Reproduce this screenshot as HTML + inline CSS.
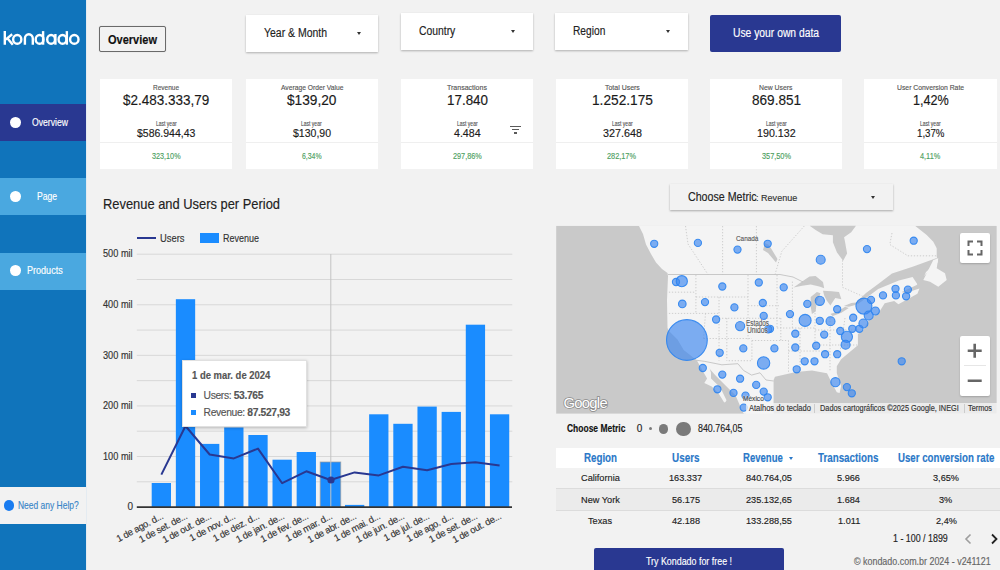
<!DOCTYPE html><html><head><meta charset="utf-8"><style>
*{margin:0;padding:0;box-sizing:border-box}
html,body{width:1000px;height:570px;overflow:hidden;background:#f2f2f2;font-family:"Liberation Sans",sans-serif}
.a{position:absolute}
.t{position:absolute;white-space:nowrap;line-height:1;-webkit-text-stroke:0.15px currentColor}
.card{position:absolute;background:#fff}
.dd{position:absolute;background:#fff;box-shadow:0 1px 2px rgba(0,0,0,.28)}
.arr{position:absolute;width:0;height:0;border-left:2.5px solid transparent;border-right:2.5px solid transparent;border-top:3px solid #333}
</style></head><body>
<div class="a" style="left:0;top:0;width:86px;height:570px;background:#1074bb"></div>
<div class="a" style="left:86px;top:0;width:1px;height:570px;background:#e4ebf1"></div>
<svg class="a" style="left:0;top:0" width="86" height="60"><g fill="none" stroke="#fff" stroke-width="2.4"><path d="M4.8 31.1 V44.7 M12.2 34.3 L5.6 39.6 M7.4 38.2 L12.8 44.7"/><ellipse cx="17.25" cy="39.4" rx="4.1" ry="4.35"/><path d="M24.9 44.7 V38.6 A3.95 4.4 0 0 1 32.8 38.6 V44.7"/><ellipse cx="39.6" cy="39.4" rx="3.9" ry="4.35"/><path d="M43.1 31.1 V44.7"/><ellipse cx="51.1" cy="39.4" rx="3.9" ry="4.35"/><path d="M55.4 34 V44.7"/><ellipse cx="62.5" cy="39.4" rx="3.9" ry="4.35"/><path d="M66.85 31.1 V44.7"/><ellipse cx="74.3" cy="39.4" rx="4.2" ry="4.35"/></g></svg>
<div class="a" style="left:0;top:104px;width:86px;height:37px;background:#293891"></div>
<div class="a" style="left:10.1px;top:116.89999999999999px;width:10.8px;height:10.8px;border-radius:50%;background:#fff"></div>
<div class="t" style="left:32.40px;top:117.53px;font-size:10px;color:#fff;transform:scaleX(0.8615);transform-origin:0 0;">Overview</div>
<div class="a" style="left:0;top:178.3px;width:86px;height:37px;background:#4aa8e0"></div>
<div class="a" style="left:10.1px;top:191.20000000000002px;width:10.8px;height:10.8px;border-radius:50%;background:#fff"></div>
<div class="t" style="left:37.40px;top:191.84px;font-size:10px;color:#fff;transform:scaleX(0.8607);transform-origin:0 0;">Page</div>
<div class="a" style="left:0;top:252.5px;width:86px;height:37px;background:#4aa8e0"></div>
<div class="a" style="left:10.1px;top:265.40000000000003px;width:10.8px;height:10.8px;border-radius:50%;background:#fff"></div>
<div class="t" style="left:27.30px;top:266.04px;font-size:10px;color:#fff;transform:scaleX(0.9047);transform-origin:0 0;">Products</div>
<div class="a" style="left:0;top:486.8px;width:86px;height:37px;background:#f2f2f2"></div>
<div class="a" style="left:3.5px;top:500.1px;width:10.6px;height:10.6px;border-radius:50%;background:#1a7cf0"></div>
<div class="t" style="left:17.80px;top:500.50px;font-size:10.4px;color:#3a86c8;transform:scaleX(0.8153);transform-origin:0 0;">Need any Help?</div>
<div class="a" style="left:99px;top:25.6px;width:67px;height:26.2px;border:1px solid #6a6a6a;border-radius:2px;background:#f2f2f2;box-shadow:0 0 1px rgba(0,0,0,.25)"></div>
<div class="t" style="left:108.00px;top:32.50px;font-size:13px;color:#111;font-weight:bold;transform:scaleX(0.8476);transform-origin:0 0;">Overview</div>
<div class="dd" style="left:245.9px;top:14.8px;width:132.3px;height:37.0px"></div>
<div class="t" style="left:263.90px;top:27.44px;font-size:12px;color:#222;transform:scaleX(0.8718);transform-origin:0 0;">Year &amp; Month</div>
<div class="arr" style="left:356.5px;top:32.3px"></div>
<div class="dd" style="left:400.7px;top:12.6px;width:132.3px;height:37.0px"></div>
<div class="t" style="left:418.70px;top:25.24px;font-size:12px;color:#222;transform:scaleX(0.8640);transform-origin:0 0;">Country</div>
<div class="arr" style="left:510.70000000000005px;top:30.1px"></div>
<div class="dd" style="left:555.4px;top:12.5px;width:132.4px;height:37.0px"></div>
<div class="t" style="left:573.20px;top:25.14px;font-size:12px;color:#222;transform:scaleX(0.8494);transform-origin:0 0;">Region</div>
<div class="arr" style="left:665.5px;top:30.0px"></div>
<div class="a" style="left:710.2px;top:14.5px;width:131.3px;height:37px;background:#293891;border-radius:2px"></div>
<div class="t" style="left:732.80px;top:27.14px;font-size:12px;color:#fff;transform:scaleX(0.8596);transform-origin:0 0;">Use your own data</div>
<div class="card" style="left:99.6px;top:78.5px;width:132.5px;height:90px"></div>
<div class="a" style="left:99.6px;top:141.6px;width:132.5px;height:1px;background:#efefef"></div>
<div class="t" style="left:152.80px;top:84.23px;font-size:8px;color:#555;transform:scaleX(0.8120);transform-origin:0 0;">Revenue</div>
<div class="t" style="left:122.64px;top:92.75px;font-size:14px;color:#1a1a1a;transform:scaleX(0.9642);transform-origin:0 0;">$2.483.333,79</div>
<div class="t" style="left:155.50px;top:120.84px;font-size:6.8px;color:#555;transform:scaleX(0.7366);transform-origin:0 0;">Last year</div>
<div class="t" style="left:136.65px;top:127.91px;font-size:11.8px;color:#1a1a1a;transform:scaleX(0.8885);transform-origin:0 0;">$586.944,43</div>
<div class="t" style="left:151.50px;top:152.24px;font-size:8.7px;color:#4ea162;transform:scaleX(0.8328);transform-origin:0 0;">323,10%</div>
<div class="card" style="left:245.5px;top:78.5px;width:132.5px;height:90px"></div>
<div class="a" style="left:245.5px;top:141.6px;width:132.5px;height:1px;background:#efefef"></div>
<div class="t" style="left:280.50px;top:84.23px;font-size:8px;color:#555;transform:scaleX(0.8386);transform-origin:0 0;">Average Order Value</div>
<div class="t" style="left:286.98px;top:92.75px;font-size:14px;color:#1a1a1a;transform:scaleX(0.9771);transform-origin:0 0;">$139,20</div>
<div class="t" style="left:301.40px;top:120.84px;font-size:6.8px;color:#555;transform:scaleX(0.7366);transform-origin:0 0;">Last year</div>
<div class="t" style="left:292.70px;top:127.91px;font-size:11.8px;color:#1a1a1a;transform:scaleX(0.8911);transform-origin:0 0;">$130,90</div>
<div class="t" style="left:301.87px;top:152.24px;font-size:8.7px;color:#4ea162;transform:scaleX(0.7968);transform-origin:0 0;">6,34%</div>
<div class="card" style="left:400.8px;top:78.5px;width:132.5px;height:90px"></div>
<div class="a" style="left:400.8px;top:141.6px;width:132.5px;height:1px;background:#efefef"></div>
<div class="t" style="left:447.03px;top:84.23px;font-size:8px;color:#555;transform:scaleX(0.8778);transform-origin:0 0;">Transactions</div>
<div class="t" style="left:446.50px;top:92.75px;font-size:14px;color:#1a1a1a;transform:scaleX(0.9574);transform-origin:0 0;">17.840</div>
<div class="t" style="left:456.70px;top:120.84px;font-size:6.8px;color:#555;transform:scaleX(0.7366);transform-origin:0 0;">Last year</div>
<div class="t" style="left:453.71px;top:127.91px;font-size:11.8px;color:#1a1a1a;transform:scaleX(0.9000);transform-origin:0 0;">4.484</div>
<div class="t" style="left:452.60px;top:152.24px;font-size:8.7px;color:#4ea162;transform:scaleX(0.8388);transform-origin:0 0;">297,86%</div>
<div class="card" style="left:555.8px;top:78.5px;width:132.5px;height:90px"></div>
<div class="a" style="left:555.8px;top:141.6px;width:132.5px;height:1px;background:#efefef"></div>
<div class="t" style="left:604.58px;top:84.23px;font-size:8px;color:#555;transform:scaleX(0.8708);transform-origin:0 0;">Total Users</div>
<div class="t" style="left:591.51px;top:92.75px;font-size:14px;color:#1a1a1a;transform:scaleX(0.9791);transform-origin:0 0;">1.252.175</div>
<div class="t" style="left:611.70px;top:120.84px;font-size:6.8px;color:#555;transform:scaleX(0.7366);transform-origin:0 0;">Last year</div>
<div class="t" style="left:602.53px;top:127.91px;font-size:11.8px;color:#1a1a1a;transform:scaleX(0.9129);transform-origin:0 0;">327.648</div>
<div class="t" style="left:607.49px;top:152.24px;font-size:8.7px;color:#4ea162;transform:scaleX(0.8449);transform-origin:0 0;">282,17%</div>
<div class="card" style="left:709.9px;top:78.5px;width:132.5px;height:90px"></div>
<div class="a" style="left:709.9px;top:141.6px;width:132.5px;height:1px;background:#efefef"></div>
<div class="t" style="left:759.41px;top:84.23px;font-size:8px;color:#555;transform:scaleX(0.8535);transform-origin:0 0;">New Users</div>
<div class="t" style="left:751.53px;top:92.75px;font-size:14px;color:#1a1a1a;transform:scaleX(0.9709);transform-origin:0 0;">869.851</div>
<div class="t" style="left:765.80px;top:120.84px;font-size:6.8px;color:#555;transform:scaleX(0.7366);transform-origin:0 0;">Last year</div>
<div class="t" style="left:756.79px;top:127.91px;font-size:11.8px;color:#1a1a1a;transform:scaleX(0.9056);transform-origin:0 0;">190.132</div>
<div class="t" style="left:761.59px;top:152.24px;font-size:8.7px;color:#4ea162;transform:scaleX(0.8449);transform-origin:0 0;">357,50%</div>
<div class="card" style="left:864.4px;top:78.5px;width:132.5px;height:90px"></div>
<div class="a" style="left:864.4px;top:141.6px;width:132.5px;height:1px;background:#efefef"></div>
<div class="t" style="left:897.06px;top:84.23px;font-size:8px;color:#555;transform:scaleX(0.8524);transform-origin:0 0;">User Conversion Rate</div>
<div class="t" style="left:912.68px;top:92.75px;font-size:14px;color:#1a1a1a;transform:scaleX(0.9030);transform-origin:0 0;">1,42%</div>
<div class="t" style="left:920.30px;top:120.84px;font-size:6.8px;color:#555;transform:scaleX(0.7366);transform-origin:0 0;">Last year</div>
<div class="t" style="left:916.85px;top:127.91px;font-size:11.8px;color:#1a1a1a;transform:scaleX(0.8220);transform-origin:0 0;">1,37%</div>
<div class="t" style="left:920.46px;top:152.24px;font-size:8.7px;color:#4ea162;transform:scaleX(0.8442);transform-origin:0 0;">4,11%</div>
<div class="a" style="left:509.8px;top:125.6px;width:11px;height:1.4px;background:#5a5a5a"></div>
<div class="a" style="left:512px;top:128.8px;width:6.6px;height:1.4px;background:#5a5a5a"></div>
<div class="a" style="left:514px;top:132.4px;width:2.8px;height:1.4px;background:#5a5a5a"></div>
<div class="t" style="left:102.80px;top:196.73px;font-size:14.5px;color:#212121;transform:scaleX(0.8891);transform-origin:0 0;">Revenue and Users per Period</div>
<div class="a" style="left:136.7px;top:237px;width:19px;height:2px;background:#293891"></div>
<div class="t" style="left:159.70px;top:232.61px;font-size:10.5px;color:#333;transform:scaleX(0.8936);transform-origin:0 0;">Users</div>
<div class="a" style="left:200px;top:232.8px;width:19.3px;height:10.2px;background:#1a8cff"></div>
<div class="t" style="left:223.00px;top:232.61px;font-size:10.5px;color:#333;transform:scaleX(0.8566);transform-origin:0 0;">Revenue</div>
<svg class="a" style="left:0;top:0" width="1000" height="570"><line x1="136.8" x2="512.3" y1="481.81" y2="481.81" stroke="#d8d8d8" stroke-width="1"/><line x1="136.8" x2="512.3" y1="456.52" y2="456.52" stroke="#d8d8d8" stroke-width="1"/><line x1="136.8" x2="512.3" y1="431.23" y2="431.23" stroke="#d8d8d8" stroke-width="1"/><line x1="136.8" x2="512.3" y1="405.94" y2="405.94" stroke="#d8d8d8" stroke-width="1"/><line x1="136.8" x2="512.3" y1="380.65" y2="380.65" stroke="#d8d8d8" stroke-width="1"/><line x1="136.8" x2="512.3" y1="355.36" y2="355.36" stroke="#d8d8d8" stroke-width="1"/><line x1="136.8" x2="512.3" y1="330.07" y2="330.07" stroke="#d8d8d8" stroke-width="1"/><line x1="136.8" x2="512.3" y1="304.78" y2="304.78" stroke="#d8d8d8" stroke-width="1"/><line x1="136.8" x2="512.3" y1="279.49" y2="279.49" stroke="#d8d8d8" stroke-width="1"/><line x1="136.8" x2="512.3" y1="254.20" y2="254.20" stroke="#d8d8d8" stroke-width="1"/><rect x="151.70" y="483.00" width="19.3" height="24.10" fill="#1a8cff"/><rect x="175.86" y="299.20" width="19.3" height="207.90" fill="#1a8cff"/><rect x="200.02" y="443.90" width="19.3" height="63.20" fill="#1a8cff"/><rect x="224.18" y="427.50" width="19.3" height="79.60" fill="#1a8cff"/><rect x="248.34" y="435.00" width="19.3" height="72.10" fill="#1a8cff"/><rect x="272.50" y="459.70" width="19.3" height="47.40" fill="#1a8cff"/><rect x="296.66" y="452.00" width="19.3" height="55.10" fill="#1a8cff"/><rect x="320.22" y="462.00" width="20.50" height="45.10" fill="#1a8cff" stroke="#9a9a9a" stroke-opacity="0.7" stroke-width="1"/><rect x="344.98" y="504.90" width="19.3" height="2.20" fill="#1a8cff"/><rect x="369.14" y="414.30" width="19.3" height="92.80" fill="#1a8cff"/><rect x="393.30" y="423.80" width="19.3" height="83.30" fill="#1a8cff"/><rect x="417.46" y="406.60" width="19.3" height="100.50" fill="#1a8cff"/><rect x="441.62" y="411.90" width="19.3" height="95.20" fill="#1a8cff"/><rect x="465.78" y="324.70" width="19.3" height="182.40" fill="#1a8cff"/><rect x="489.94" y="414.30" width="19.3" height="92.80" fill="#1a8cff"/><line x1="330.8" x2="330.8" y1="254" y2="507.1" stroke="#c4c4c4" stroke-width="1"/><polyline points="161.35,474.60 185.51,426.00 209.67,454.50 233.83,458.40 257.99,448.60 282.15,483.20 306.31,471.30 330.47,480.00 354.63,472.40 378.79,475.40 402.95,466.80 427.11,470.30 451.27,464.00 475.43,462.30 499.59,465.60" fill="none" stroke="#293891" stroke-width="2" stroke-linejoin="round"/><circle cx="331" cy="480" r="3.6" fill="#293891"/><line x1="136.8" x2="512" y1="507.1" y2="507.1" stroke="#333" stroke-width="1.6"/></svg>
<div class="t" style="left:103.34px;top:249.34px;font-size:10px;color:#333;transform:scaleX(0.9200);transform-origin:0 0;">500 mil</div>
<div class="t" style="left:103.34px;top:299.92px;font-size:10px;color:#333;transform:scaleX(0.9200);transform-origin:0 0;">400 mil</div>
<div class="t" style="left:103.34px;top:350.50px;font-size:10px;color:#333;transform:scaleX(0.9200);transform-origin:0 0;">300 mil</div>
<div class="t" style="left:103.34px;top:401.08px;font-size:10px;color:#333;transform:scaleX(0.9200);transform-origin:0 0;">200 mil</div>
<div class="t" style="left:103.34px;top:451.66px;font-size:10px;color:#333;transform:scaleX(0.9200);transform-origin:0 0;">100 mil</div>
<div class="t" style="left:127.44px;top:502.24px;font-size:10px;color:#333;">0</div>
<div class="t" style="left:-40.15px;top:510.60px;width:200px;text-align:right;font-size:9.5px;color:#333;letter-spacing:-0.3px;transform-origin:100% 0;transform:rotate(-28deg)">1 de ago. d...</div>
<div class="t" style="left:-15.99px;top:510.60px;width:200px;text-align:right;font-size:9.5px;color:#333;letter-spacing:-0.3px;transform-origin:100% 0;transform:rotate(-28deg)">1 de set. de...</div>
<div class="t" style="left:8.17px;top:510.60px;width:200px;text-align:right;font-size:9.5px;color:#333;letter-spacing:-0.3px;transform-origin:100% 0;transform:rotate(-28deg)">1 de out. de...</div>
<div class="t" style="left:32.33px;top:510.60px;width:200px;text-align:right;font-size:9.5px;color:#333;letter-spacing:-0.3px;transform-origin:100% 0;transform:rotate(-28deg)">1 de nov. d...</div>
<div class="t" style="left:56.49px;top:510.60px;width:200px;text-align:right;font-size:9.5px;color:#333;letter-spacing:-0.3px;transform-origin:100% 0;transform:rotate(-28deg)">1 de dez. d...</div>
<div class="t" style="left:80.65px;top:510.60px;width:200px;text-align:right;font-size:9.5px;color:#333;letter-spacing:-0.3px;transform-origin:100% 0;transform:rotate(-28deg)">1 de jan. de...</div>
<div class="t" style="left:104.81px;top:510.60px;width:200px;text-align:right;font-size:9.5px;color:#333;letter-spacing:-0.3px;transform-origin:100% 0;transform:rotate(-28deg)">1 de fev. de...</div>
<div class="t" style="left:128.97px;top:510.60px;width:200px;text-align:right;font-size:9.5px;color:#333;letter-spacing:-0.3px;transform-origin:100% 0;transform:rotate(-28deg)">1 de mar. d...</div>
<div class="t" style="left:153.13px;top:510.60px;width:200px;text-align:right;font-size:9.5px;color:#333;letter-spacing:-0.3px;transform-origin:100% 0;transform:rotate(-28deg)">1 de abr. de...</div>
<div class="t" style="left:177.29px;top:510.60px;width:200px;text-align:right;font-size:9.5px;color:#333;letter-spacing:-0.3px;transform-origin:100% 0;transform:rotate(-28deg)">1 de mai. d...</div>
<div class="t" style="left:201.45px;top:510.60px;width:200px;text-align:right;font-size:9.5px;color:#333;letter-spacing:-0.3px;transform-origin:100% 0;transform:rotate(-28deg)">1 de jun. de...</div>
<div class="t" style="left:225.61px;top:510.60px;width:200px;text-align:right;font-size:9.5px;color:#333;letter-spacing:-0.3px;transform-origin:100% 0;transform:rotate(-28deg)">1 de jul. de...</div>
<div class="t" style="left:249.77px;top:510.60px;width:200px;text-align:right;font-size:9.5px;color:#333;letter-spacing:-0.3px;transform-origin:100% 0;transform:rotate(-28deg)">1 de ago. d...</div>
<div class="t" style="left:273.93px;top:510.60px;width:200px;text-align:right;font-size:9.5px;color:#333;letter-spacing:-0.3px;transform-origin:100% 0;transform:rotate(-28deg)">1 de set. de...</div>
<div class="t" style="left:298.09px;top:510.60px;width:200px;text-align:right;font-size:9.5px;color:#333;letter-spacing:-0.3px;transform-origin:100% 0;transform:rotate(-28deg)">1 de out. de...</div>
<div class="a" style="left:181.8px;top:360px;width:125.6px;height:67px;background:#fff;border:1px solid #e0e0e0;box-shadow:0 1px 3px rgba(0,0,0,.25)"></div>
<div class="t" style="left:192.00px;top:369.71px;font-size:10.5px;color:#555;font-weight:bold;transform:scaleX(0.9003);transform-origin:0 0;">1 de mar. de 2024</div>
<div class="a" style="left:191.3px;top:392.5px;width:5px;height:5px;background:#293891"></div>
<div class="t" style="left:203.60px;top:390.68px;font-size:10.3px;color:#555;letter-spacing:-0.36px">Users: <b>53.765</b></div>
<div class="a" style="left:191.3px;top:409.5px;width:5px;height:5px;background:#1a8cff"></div>
<div class="t" style="left:203.60px;top:407.88px;font-size:10.3px;color:#555;letter-spacing:-0.36px">Revenue: <b>87.527,93</b></div>
<div class="a" style="left:669.6px;top:184.1px;width:223.2px;height:26.2px;background:#f2f2f2;box-shadow:0 1px 2px rgba(0,0,0,.3)"></div>
<div class="t" style="left:687.60px;top:191.44px;font-size:12px;color:#222;transform:scaleX(0.8868);transform-origin:0 0;">Choose Metric</div>
<div class="t" style="left:756.40px;top:193.47px;font-size:9.6px;color:#333;transform:scaleX(0.9438);transform-origin:0 0;">: Revenue</div>
<div class="arr" style="left:870.5px;top:196.3px"></div>
<svg class="a" style="left:0;top:0" width="1000" height="570"><defs><clipPath id="mc"><rect x="556.1" y="225.8" width="440.7" height="188.0"/></clipPath></defs><g clip-path="url(#mc)"><rect x="556.1" y="225.8" width="440.7" height="188.0" fill="#c9c9c9"/><polygon points="638,224 643,234 646,244.5 651,254 656,262.5 662,269 667.5,273 668,276 667,300 667.5,328 669,331 677.5,339.6 683.7,350.1 695.1,358.9 700,362 706,364.8 715.1,375.1 725.3,385.3 735.6,395.6 742.5,411.6 744,414 773.6,414 773.6,402 773.6,380 775,376.8 796,372 812,370.4 820,372 827,373.3 831.2,381.8 836.8,392.3 839.6,393 841.1,386 836.8,373.3 836.8,366.3 841.1,359.3 849.5,352.3 857.9,345.3 857.9,334 862.1,331.2 863.7,329.5 868.9,320 879.5,311.6 884.7,303.2 894.2,301 898.4,304.2 917.4,293.7 919.5,288.4 913.2,290.5 906.8,293.7 901.7,292 916.7,285 925,275 938,262 936.7,256.7 936.7,248.3 933.3,241.7 926.7,235 915,225.8 914.5,224" fill="#f4f4f4"/><polygon points="810,224 810,226 815.6,230.1 822.7,234.2 832.9,235.2 832.9,242.3 837,252.5 843.1,260.7 847.1,253.5 845.1,242.3 844.1,237.3 851.2,232.2 855.8,226 855.8,224" fill="#c9c9c9"/><polygon points="856,302.4 866,293 878.2,283.9 892,273.6 912.6,266.7 936.7,258 937,262 926,272 919.5,287.4 912.6,277 898.8,280.5 878.2,289 858,304" fill="#c9c9c9"/><polygon points="923.3,280 933.3,260 938.3,258.3 936.7,268.3 945,273.3 946.7,280 938.3,286.7 930,281.7" fill="#f4f4f4"/><polygon points="696.8,360.3 702.5,370.5 707.1,378.5 704.3,383.1 711.7,386.5 718.5,393.3 724.2,402.5 725.5,402 726.5,400.2 722,391 718,385.3 711,378.5 711,372.8 708.5,364.8 703,361" fill="#f4f4f4"/><polygon points="765,243 769,245 777.5,259 776,262.5 768,253 763,250" fill="#c9c9c9"/><polygon points="793.5,287.6 802.1,281.5 809.5,276.6 815.6,276 823,282.1 824.2,288.3 819.3,286.4 810.7,284.6 802.1,285.8" fill="#c9c9c9"/><polygon points="810.7,296.9 816.9,291.9 820.5,293.2 816.9,301.8 815.6,311.6 811.9,314 810.7,306.7" fill="#c9c9c9"/><polygon points="823,290.7 831.6,291.3 839,291.9 841.4,299.3 835.3,298.1 832.8,301.8 830.4,305.5 826.7,300.5 824.2,295.6" fill="#c9c9c9"/><polygon points="830.4,314 837.7,311.6 845.1,306.7 848.8,307.9 841.4,312.8 832.8,315.9" fill="#c9c9c9"/><polygon points="843.9,306.1 851.3,303 856.2,302.4 856.2,304.8 848.8,306.7" fill="#c9c9c9"/><polyline points="668.9,292.2 695.9,292.2" fill="none" stroke="#c4c4c4" stroke-width="0.8" stroke-dasharray="1.3 1.7"/><polyline points="695.9,297 748,297" fill="none" stroke="#c4c4c4" stroke-width="0.8" stroke-dasharray="1.3 1.7"/><polyline points="668.9,313.4 719,313.4" fill="none" stroke="#c4c4c4" stroke-width="0.8" stroke-dasharray="1.3 1.7"/><polyline points="748,305.7 778.9,305.7" fill="none" stroke="#c4c4c4" stroke-width="0.8" stroke-dasharray="1.3 1.7"/><polyline points="719,318.3 780.8,318.3" fill="none" stroke="#c4c4c4" stroke-width="0.8" stroke-dasharray="1.3 1.7"/><polyline points="703.6,338.5 751.9,338.5" fill="none" stroke="#c4c4c4" stroke-width="0.8" stroke-dasharray="1.3 1.7"/><polyline points="777,328 815,328" fill="none" stroke="#c4c4c4" stroke-width="0.8" stroke-dasharray="1.3 1.7"/><polyline points="751.9,340.5 788.5,340.5" fill="none" stroke="#c4c4c4" stroke-width="0.8" stroke-dasharray="1.3 1.7"/><polyline points="788.5,351 830,351" fill="none" stroke="#c4c4c4" stroke-width="0.8" stroke-dasharray="1.3 1.7"/><polyline points="728.7,360.7 751.9,360.7" fill="none" stroke="#c4c4c4" stroke-width="0.8" stroke-dasharray="1.3 1.7"/><polyline points="695.9,275 695.9,313.4" fill="none" stroke="#c4c4c4" stroke-width="0.8" stroke-dasharray="1.3 1.7"/><polyline points="705.5,313.4 703.6,338.5" fill="none" stroke="#c4c4c4" stroke-width="0.8" stroke-dasharray="1.3 1.7"/><polyline points="719,297 719,360.7" fill="none" stroke="#c4c4c4" stroke-width="0.8" stroke-dasharray="1.3 1.7"/><polyline points="726.8,318 726.8,360.7" fill="none" stroke="#c4c4c4" stroke-width="0.8" stroke-dasharray="1.3 1.7"/><polyline points="748,275 748,340.5" fill="none" stroke="#c4c4c4" stroke-width="0.8" stroke-dasharray="1.3 1.7"/><polyline points="751.9,340.5 751.9,360.7" fill="none" stroke="#c4c4c4" stroke-width="0.8" stroke-dasharray="1.3 1.7"/><polyline points="777,275 777,328" fill="none" stroke="#c4c4c4" stroke-width="0.8" stroke-dasharray="1.3 1.7"/><polyline points="780.8,318 780.8,340.5" fill="none" stroke="#c4c4c4" stroke-width="0.8" stroke-dasharray="1.3 1.7"/><polyline points="788.5,340.5 788.5,372" fill="none" stroke="#c4c4c4" stroke-width="0.8" stroke-dasharray="1.3 1.7"/><polyline points="792.4,281.6 792.4,328" fill="none" stroke="#c4c4c4" stroke-width="0.8" stroke-dasharray="1.3 1.7"/><polyline points="800,328 800,371" fill="none" stroke="#c4c4c4" stroke-width="0.8" stroke-dasharray="1.3 1.7"/><polyline points="815,310 815,351" fill="none" stroke="#c4c4c4" stroke-width="0.8" stroke-dasharray="1.3 1.7"/><polyline points="830,318 830,372" fill="none" stroke="#c4c4c4" stroke-width="0.8" stroke-dasharray="1.3 1.7"/><polyline points="845,318 840,352" fill="none" stroke="#c4c4c4" stroke-width="0.8" stroke-dasharray="1.3 1.7"/><polyline points="815,330 860,330" fill="none" stroke="#c4c4c4" stroke-width="0.8" stroke-dasharray="1.3 1.7"/><polyline points="820,345 858,345" fill="none" stroke="#c4c4c4" stroke-width="0.8" stroke-dasharray="1.3 1.7"/><polyline points="685.5,226 688,244 708,274.5" fill="none" stroke="#c4c4c4" stroke-width="0.8" stroke-dasharray="1.3 1.7"/><polyline points="722.6,226 722.6,274.5" fill="none" stroke="#c4c4c4" stroke-width="0.8" stroke-dasharray="1.3 1.7"/><polyline points="756.4,226 756.4,274.5" fill="none" stroke="#c4c4c4" stroke-width="0.8" stroke-dasharray="1.3 1.7"/><polyline points="804.3,226 781.8,251.3 775,274.5" fill="none" stroke="#c4c4c4" stroke-width="0.8" stroke-dasharray="1.3 1.7"/><polyline points="842.5,260.3 842.5,287.3 862.8,296.3" fill="none" stroke="#c4c4c4" stroke-width="0.8" stroke-dasharray="1.3 1.7"/><polyline points="892,233 889.8,244.5 907.8,255.8 937,255.8" fill="none" stroke="#c4c4c4" stroke-width="0.8" stroke-dasharray="1.3 1.7"/><polyline points="668,274.5 780,274.5 793,277 803,282" fill="none" stroke="#bdbdbd" stroke-width="0.8"/><polyline points="696.8,360.3 704.8,361.4 721.9,364.8 737.9,363.7 743.6,370.5 751.6,375.1 760,372.8 766,380 773.6,381" fill="none" stroke="#bdbdbd" stroke-width="0.8"/><circle cx="654.2" cy="243.8" r="3.6" fill="#3c87f0" fill-opacity="0.66" stroke="#2c84f0" stroke-opacity="0.9" stroke-width="1.1"/><circle cx="697.9" cy="242.9" r="3.6" fill="#3c87f0" fill-opacity="0.66" stroke="#2c84f0" stroke-opacity="0.9" stroke-width="1.1"/><circle cx="737.5" cy="249.6" r="3.6" fill="#3c87f0" fill-opacity="0.66" stroke="#2c84f0" stroke-opacity="0.9" stroke-width="1.1"/><circle cx="767.7" cy="243.8" r="3.6" fill="#3c87f0" fill-opacity="0.66" stroke="#2c84f0" stroke-opacity="0.9" stroke-width="1.1"/><circle cx="820.7" cy="259.8" r="4.5" fill="#3c87f0" fill-opacity="0.66" stroke="#2c84f0" stroke-opacity="0.9" stroke-width="1.1"/><circle cx="867" cy="249.1" r="3.6" fill="#3c87f0" fill-opacity="0.66" stroke="#2c84f0" stroke-opacity="0.9" stroke-width="1.1"/><circle cx="913.7" cy="240.7" r="3.6" fill="#3c87f0" fill-opacity="0.66" stroke="#2c84f0" stroke-opacity="0.9" stroke-width="1.1"/><circle cx="676" cy="282" r="3.6" fill="#3c87f0" fill-opacity="0.66" stroke="#2c84f0" stroke-opacity="0.9" stroke-width="1.1"/><circle cx="681.8" cy="281.2" r="5.6" fill="#3c87f0" fill-opacity="0.66" stroke="#2c84f0" stroke-opacity="0.9" stroke-width="1.1"/><circle cx="722.3" cy="286.5" r="3.6" fill="#3c87f0" fill-opacity="0.66" stroke="#2c84f0" stroke-opacity="0.9" stroke-width="1.1"/><circle cx="758.8" cy="282.5" r="3.6" fill="#3c87f0" fill-opacity="0.66" stroke="#2c84f0" stroke-opacity="0.9" stroke-width="1.1"/><circle cx="783.7" cy="287.4" r="3.6" fill="#3c87f0" fill-opacity="0.66" stroke="#2c84f0" stroke-opacity="0.9" stroke-width="1.1"/><circle cx="682.3" cy="303.9" r="3.8" fill="#3c87f0" fill-opacity="0.66" stroke="#2c84f0" stroke-opacity="0.9" stroke-width="1.1"/><circle cx="705" cy="302.1" r="3.6" fill="#3c87f0" fill-opacity="0.66" stroke="#2c84f0" stroke-opacity="0.9" stroke-width="1.1"/><circle cx="734.4" cy="307.4" r="3.6" fill="#3c87f0" fill-opacity="0.66" stroke="#2c84f0" stroke-opacity="0.9" stroke-width="1.1"/><circle cx="762.8" cy="303" r="3.6" fill="#3c87f0" fill-opacity="0.66" stroke="#2c84f0" stroke-opacity="0.9" stroke-width="1.1"/><circle cx="763.7" cy="315.9" r="3.6" fill="#3c87f0" fill-opacity="0.66" stroke="#2c84f0" stroke-opacity="0.9" stroke-width="1.1"/><circle cx="716.1" cy="319.5" r="3.6" fill="#3c87f0" fill-opacity="0.66" stroke="#2c84f0" stroke-opacity="0.9" stroke-width="1.1"/><circle cx="790" cy="314.1" r="3.6" fill="#3c87f0" fill-opacity="0.66" stroke="#2c84f0" stroke-opacity="0.9" stroke-width="1.1"/><circle cx="807.3" cy="303.9" r="3.6" fill="#3c87f0" fill-opacity="0.66" stroke="#2c84f0" stroke-opacity="0.9" stroke-width="1.1"/><circle cx="819.8" cy="300.8" r="4.6" fill="#3c87f0" fill-opacity="0.66" stroke="#2c84f0" stroke-opacity="0.9" stroke-width="1.1"/><circle cx="837.2" cy="309.2" r="3.6" fill="#3c87f0" fill-opacity="0.66" stroke="#2c84f0" stroke-opacity="0.9" stroke-width="1.1"/><circle cx="805.1" cy="320.4" r="6" fill="#3c87f0" fill-opacity="0.66" stroke="#2c84f0" stroke-opacity="0.9" stroke-width="1.1"/><circle cx="819.8" cy="320.8" r="3.6" fill="#3c87f0" fill-opacity="0.66" stroke="#2c84f0" stroke-opacity="0.9" stroke-width="1.1"/><circle cx="830.5" cy="321.2" r="4.5" fill="#3c87f0" fill-opacity="0.66" stroke="#2c84f0" stroke-opacity="0.9" stroke-width="1.1"/><circle cx="853.2" cy="317.7" r="3.6" fill="#3c87f0" fill-opacity="0.66" stroke="#2c84f0" stroke-opacity="0.9" stroke-width="1.1"/><circle cx="863.9" cy="306.1" r="8" fill="#3c87f0" fill-opacity="0.66" stroke="#2c84f0" stroke-opacity="0.9" stroke-width="1.1"/><circle cx="868.7" cy="315.5" r="4.5" fill="#3c87f0" fill-opacity="0.66" stroke="#2c84f0" stroke-opacity="0.9" stroke-width="1.1"/><circle cx="875.4" cy="311" r="4" fill="#3c87f0" fill-opacity="0.66" stroke="#2c84f0" stroke-opacity="0.9" stroke-width="1.1"/><circle cx="883" cy="295.4" r="3.6" fill="#3c87f0" fill-opacity="0.66" stroke="#2c84f0" stroke-opacity="0.9" stroke-width="1.1"/><circle cx="871" cy="299.9" r="3.6" fill="#3c87f0" fill-opacity="0.66" stroke="#2c84f0" stroke-opacity="0.9" stroke-width="1.1"/><circle cx="895.5" cy="288.8" r="3.6" fill="#3c87f0" fill-opacity="0.66" stroke="#2c84f0" stroke-opacity="0.9" stroke-width="1.1"/><circle cx="907.9" cy="289.6" r="3.6" fill="#3c87f0" fill-opacity="0.66" stroke="#2c84f0" stroke-opacity="0.9" stroke-width="1.1"/><circle cx="895.9" cy="295.4" r="3.6" fill="#3c87f0" fill-opacity="0.66" stroke="#2c84f0" stroke-opacity="0.9" stroke-width="1.1"/><circle cx="906.1" cy="296.3" r="3.6" fill="#3c87f0" fill-opacity="0.66" stroke="#2c84f0" stroke-opacity="0.9" stroke-width="1.1"/><circle cx="740.1" cy="326.1" r="4.6" fill="#3c87f0" fill-opacity="0.66" stroke="#2c84f0" stroke-opacity="0.9" stroke-width="1.1"/><circle cx="770" cy="328.8" r="3.6" fill="#3c87f0" fill-opacity="0.66" stroke="#2c84f0" stroke-opacity="0.9" stroke-width="1.1"/><circle cx="795.3" cy="333.7" r="3.6" fill="#3c87f0" fill-opacity="0.66" stroke="#2c84f0" stroke-opacity="0.9" stroke-width="1.1"/><circle cx="824.2" cy="334.6" r="3.6" fill="#3c87f0" fill-opacity="0.66" stroke="#2c84f0" stroke-opacity="0.9" stroke-width="1.1"/><circle cx="840.3" cy="331" r="3.6" fill="#3c87f0" fill-opacity="0.66" stroke="#2c84f0" stroke-opacity="0.9" stroke-width="1.1"/><circle cx="852.3" cy="328.8" r="3.6" fill="#3c87f0" fill-opacity="0.66" stroke="#2c84f0" stroke-opacity="0.9" stroke-width="1.1"/><circle cx="859.4" cy="328.8" r="3.6" fill="#3c87f0" fill-opacity="0.66" stroke="#2c84f0" stroke-opacity="0.9" stroke-width="1.1"/><circle cx="863.4" cy="323.5" r="4.5" fill="#3c87f0" fill-opacity="0.66" stroke="#2c84f0" stroke-opacity="0.9" stroke-width="1.1"/><circle cx="846.9" cy="336.8" r="5.6" fill="#3c87f0" fill-opacity="0.66" stroke="#2c84f0" stroke-opacity="0.9" stroke-width="1.1"/><circle cx="845.6" cy="344.8" r="4.5" fill="#3c87f0" fill-opacity="0.66" stroke="#2c84f0" stroke-opacity="0.9" stroke-width="1.1"/><circle cx="686.9" cy="340" r="20.4" fill="#3c87f0" fill-opacity="0.66" stroke="#2c84f0" stroke-opacity="0.9" stroke-width="1.1"/><circle cx="719.7" cy="352.8" r="3.6" fill="#3c87f0" fill-opacity="0.66" stroke="#2c84f0" stroke-opacity="0.9" stroke-width="1.1"/><circle cx="743.3" cy="348.4" r="3.6" fill="#3c87f0" fill-opacity="0.66" stroke="#2c84f0" stroke-opacity="0.9" stroke-width="1.1"/><circle cx="774.4" cy="348.4" r="3.6" fill="#3c87f0" fill-opacity="0.66" stroke="#2c84f0" stroke-opacity="0.9" stroke-width="1.1"/><circle cx="795.3" cy="347.5" r="3.6" fill="#3c87f0" fill-opacity="0.66" stroke="#2c84f0" stroke-opacity="0.9" stroke-width="1.1"/><circle cx="816.2" cy="345.7" r="3.6" fill="#3c87f0" fill-opacity="0.66" stroke="#2c84f0" stroke-opacity="0.9" stroke-width="1.1"/><circle cx="763.6" cy="362.9" r="6.2" fill="#3c87f0" fill-opacity="0.66" stroke="#2c84f0" stroke-opacity="0.9" stroke-width="1.1"/><circle cx="804.7" cy="361.3" r="3.6" fill="#3c87f0" fill-opacity="0.66" stroke="#2c84f0" stroke-opacity="0.9" stroke-width="1.1"/><circle cx="814.5" cy="361.3" r="3.6" fill="#3c87f0" fill-opacity="0.66" stroke="#2c84f0" stroke-opacity="0.9" stroke-width="1.1"/><circle cx="825.1" cy="354.2" r="3.6" fill="#3c87f0" fill-opacity="0.66" stroke="#2c84f0" stroke-opacity="0.9" stroke-width="1.1"/><circle cx="837.2" cy="354.2" r="3.6" fill="#3c87f0" fill-opacity="0.66" stroke="#2c84f0" stroke-opacity="0.9" stroke-width="1.1"/><circle cx="796.7" cy="369.3" r="3.6" fill="#3c87f0" fill-opacity="0.66" stroke="#2c84f0" stroke-opacity="0.9" stroke-width="1.1"/><circle cx="702.8" cy="368" r="3.6" fill="#3c87f0" fill-opacity="0.66" stroke="#2c84f0" stroke-opacity="0.9" stroke-width="1.1"/><circle cx="722.3" cy="374.6" r="3.6" fill="#3c87f0" fill-opacity="0.66" stroke="#2c84f0" stroke-opacity="0.9" stroke-width="1.1"/><circle cx="740.1" cy="378.7" r="3.6" fill="#3c87f0" fill-opacity="0.66" stroke="#2c84f0" stroke-opacity="0.9" stroke-width="1.1"/><circle cx="756.2" cy="384.9" r="3.6" fill="#3c87f0" fill-opacity="0.66" stroke="#2c84f0" stroke-opacity="0.9" stroke-width="1.1"/><circle cx="763.7" cy="391.6" r="3.6" fill="#3c87f0" fill-opacity="0.66" stroke="#2c84f0" stroke-opacity="0.9" stroke-width="1.1"/><circle cx="767.7" cy="397.3" r="3.6" fill="#3c87f0" fill-opacity="0.66" stroke="#2c84f0" stroke-opacity="0.9" stroke-width="1.1"/><circle cx="717.4" cy="389.3" r="3.6" fill="#3c87f0" fill-opacity="0.66" stroke="#2c84f0" stroke-opacity="0.9" stroke-width="1.1"/><circle cx="733.5" cy="392.9" r="3.6" fill="#3c87f0" fill-opacity="0.66" stroke="#2c84f0" stroke-opacity="0.9" stroke-width="1.1"/><circle cx="745.5" cy="395.6" r="3.6" fill="#3c87f0" fill-opacity="0.66" stroke="#2c84f0" stroke-opacity="0.9" stroke-width="1.1"/><circle cx="835.4" cy="382.2" r="4.6" fill="#3c87f0" fill-opacity="0.66" stroke="#2c84f0" stroke-opacity="0.9" stroke-width="1.1"/><circle cx="846.9" cy="387.1" r="3.6" fill="#3c87f0" fill-opacity="0.66" stroke="#2c84f0" stroke-opacity="0.9" stroke-width="1.1"/><circle cx="851.8" cy="393.3" r="3.6" fill="#3c87f0" fill-opacity="0.66" stroke="#2c84f0" stroke-opacity="0.9" stroke-width="1.1"/><circle cx="901.7" cy="361.3" r="3.6" fill="#3c87f0" fill-opacity="0.66" stroke="#2c84f0" stroke-opacity="0.9" stroke-width="1.1"/><circle cx="768.2" cy="329.3" r="3.6" fill="#3c87f0" fill-opacity="0.66" stroke="#2c84f0" stroke-opacity="0.9" stroke-width="1.1"/><circle cx="743.7" cy="407.6" r="3.6" fill="#3c87f0" fill-opacity="0.66" stroke="#2c84f0" stroke-opacity="0.9" stroke-width="1.1"/></g></svg>
<div class="t" style="left:736.40px;top:234.53px;font-size:8px;color:#555;transform:scaleX(0.7994);transform-origin:0 0;text-shadow:0 0 1.5px #fff,0 0 1.5px #fff">Canadá</div>
<div class="t" style="left:746.00px;top:318.89px;font-size:8.4px;color:#5a5a5a;transform:scaleX(0.7578);transform-origin:0 0;text-shadow:0 0 1.5px #fff,0 0 1.5px #fff">Estados</div>
<div class="t" style="left:747.20px;top:325.89px;font-size:8.4px;color:#5a5a5a;transform:scaleX(0.7955);transform-origin:0 0;text-shadow:0 0 1.5px #fff,0 0 1.5px #fff">Unidos</div>
<div class="t" style="left:743.00px;top:395.43px;font-size:8px;color:#444;transform:scaleX(0.8209);transform-origin:0 0;text-shadow:0 0 1.5px #fff,0 0 1.5px #fff">México</div>
<svg class="a" style="left:556px;top:388px" width="60" height="28"><text x="7.4" y="20.2" font-family="Liberation Sans" font-size="14.8" letter-spacing="-0.7" fill="#fff" stroke="#8a8a8a" stroke-width="1.6" paint-order="stroke fill">Google</text></svg>
<div class="a" style="left:746px;top:403.3px;width:250.8px;height:10.3px;background:rgba(245,245,245,.75)"></div>
<div class="t" style="left:748.50px;top:404.66px;font-size:8.2px;color:#333;transform:scaleX(0.9190);transform-origin:0 0;">Atalhos do teclado</div>
<div class="a" style="left:813.5px;top:404px;width:1px;height:9px;background:#ccc"></div>
<div class="t" style="left:819.50px;top:404.66px;font-size:8.2px;color:#333;transform:scaleX(0.8963);transform-origin:0 0;">Dados cartográficos ©2025 Google, INEGI</div>
<div class="a" style="left:963.5px;top:404px;width:1px;height:9px;background:#ccc"></div>
<div class="t" style="left:967.80px;top:404.66px;font-size:8.2px;color:#333;transform:scaleX(0.8928);transform-origin:0 0;">Termos</div>
<div class="a" style="left:960px;top:233px;width:29.7px;height:30px;background:#fff;border-radius:2px;box-shadow:0 1px 2px rgba(0,0,0,.2)"></div>
<svg class="a" style="left:960px;top:233px" width="30" height="30"><path d="M8.5 13 V8.5 H13 M17 8.5 H21.5 V13 M21.5 17 V21.5 H17 M13 21.5 H8.5 V17" fill="none" stroke="#666" stroke-width="2"/></svg>
<div class="a" style="left:960px;top:335.8px;width:29.7px;height:60px;background:#fff;border-radius:2px;box-shadow:0 1px 2px rgba(0,0,0,.2)"></div>
<div class="a" style="left:964px;top:365.4px;width:21.5px;height:1px;background:#e6e6e6"></div>
<svg class="a" style="left:960px;top:335.8px" width="30" height="60"><path d="M7.7 14.7 H21.7 M14.7 7.7 V21.7 M7.7 44.8 H21.7" fill="none" stroke="#666" stroke-width="2.6"/></svg>
<div class="t" style="left:567.40px;top:423.94px;font-size:10px;color:#111;font-weight:bold;transform:scaleX(0.8476);transform-origin:0 0;">Choose Metric</div>
<div class="t" style="left:636.80px;top:423.94px;font-size:10px;color:#222;">0</div>
<div class="a" style="left:649px;top:427.3px;width:3px;height:3px;border-radius:50%;background:#7a7a7a"></div>
<div class="a" style="left:658.9px;top:424px;width:9.6px;height:9.6px;border-radius:50%;background:#7a7a7a"></div>
<div class="a" style="left:676.1px;top:421.5px;width:14.6px;height:14.6px;border-radius:50%;background:#7a7a7a"></div>
<div class="t" style="left:698.30px;top:423.94px;font-size:10px;color:#222;transform:scaleX(0.8872);transform-origin:0 0;">840.764,05</div>
<div class="a" style="left:556.2px;top:447.9px;width:444px;height:19.7px;background:#fff"></div>
<div class="a" style="left:556.2px;top:488.6px;width:444px;height:21.7px;background:#ebebeb"></div>
<div class="a" style="left:556.2px;top:488px;width:444px;height:1px;background:#dcdcdc"></div>
<div class="a" style="left:556.2px;top:510px;width:444px;height:1px;background:#dcdcdc"></div>
<div class="t" style="left:583.50px;top:451.84px;font-size:12px;color:#2a78c8;font-weight:bold;transform:scaleX(0.8116);transform-origin:0 0;">Region</div>
<div class="t" style="left:671.55px;top:451.84px;font-size:12px;color:#2a78c8;font-weight:bold;transform:scaleX(0.8244);transform-origin:0 0;">Users</div>
<div class="t" style="left:742.50px;top:451.84px;font-size:12px;color:#2a78c8;font-weight:bold;transform:scaleX(0.7957);transform-origin:0 0;">Revenue</div>
<div class="t" style="left:818.40px;top:451.84px;font-size:12px;color:#2a78c8;font-weight:bold;transform:scaleX(0.8160);transform-origin:0 0;">Transactions</div>
<div class="t" style="left:897.85px;top:451.84px;font-size:12px;color:#2a78c8;font-weight:bold;transform:scaleX(0.8067);transform-origin:0 0;">User conversion rate</div>
<div class="arr" style="left:788.5px;top:457px;border-top-color:#2a78c8"></div>
<div class="t" style="left:580.56px;top:473.02px;font-size:9.9px;color:#222;transform:scaleX(0.9300);transform-origin:0 0;">California</div>
<div class="t" style="left:668.96px;top:473.02px;font-size:9.9px;color:#222;transform:scaleX(0.9300);transform-origin:0 0;">163.337</div>
<div class="t" style="left:746.46px;top:473.02px;font-size:9.9px;color:#222;transform:scaleX(0.9300);transform-origin:0 0;">840.764,05</div>
<div class="t" style="left:837.28px;top:473.02px;font-size:9.9px;color:#222;transform:scaleX(0.9300);transform-origin:0 0;">5.966</div>
<div class="t" style="left:932.95px;top:473.02px;font-size:9.9px;color:#222;transform:scaleX(0.9300);transform-origin:0 0;">3,65%</div>
<div class="t" style="left:580.55px;top:494.52px;font-size:9.9px;color:#222;transform:scaleX(0.9300);transform-origin:0 0;">New York</div>
<div class="t" style="left:671.52px;top:494.52px;font-size:9.9px;color:#222;transform:scaleX(0.9300);transform-origin:0 0;">56.175</div>
<div class="t" style="left:746.46px;top:494.52px;font-size:9.9px;color:#222;transform:scaleX(0.9300);transform-origin:0 0;">235.132,65</div>
<div class="t" style="left:837.28px;top:494.52px;font-size:9.9px;color:#222;transform:scaleX(0.9300);transform-origin:0 0;">1.684</div>
<div class="t" style="left:939.35px;top:494.52px;font-size:9.9px;color:#222;transform:scaleX(0.9300);transform-origin:0 0;">3%</div>
<div class="t" style="left:587.97px;top:516.02px;font-size:9.9px;color:#222;transform:scaleX(0.9300);transform-origin:0 0;">Texas</div>
<div class="t" style="left:671.52px;top:516.02px;font-size:9.9px;color:#222;transform:scaleX(0.9300);transform-origin:0 0;">42.188</div>
<div class="t" style="left:746.46px;top:516.02px;font-size:9.9px;color:#222;transform:scaleX(0.9300);transform-origin:0 0;">133.288,55</div>
<div class="t" style="left:837.62px;top:516.02px;font-size:9.9px;color:#222;transform:scaleX(0.9300);transform-origin:0 0;">1.011</div>
<div class="t" style="left:935.51px;top:516.02px;font-size:9.9px;color:#222;transform:scaleX(0.9300);transform-origin:0 0;">2,4%</div>
<div class="t" style="left:893.00px;top:533.74px;font-size:10px;color:#222;transform:scaleX(0.8881);transform-origin:0 0;">1 - 100 / 1899</div>
<svg class="a" style="left:960px;top:530px" width="40" height="18"><path d="M10.5 4.5 L6 9 L10.5 13.5" fill="none" stroke="#9e9e9e" stroke-width="1.6"/><path d="M32 4.5 L36.5 9 L32 13.5" fill="none" stroke="#222" stroke-width="1.8"/></svg>
<div class="a" style="left:593.5px;top:548.2px;width:190px;height:30px;background:#293891;border-radius:2px"></div>
<div class="t" style="left:645.50px;top:555.89px;font-size:11px;color:#fff;transform:scaleX(0.8069);transform-origin:0 0;">Try Kondado for free !</div>
<div class="t" style="left:853.70px;top:556.74px;font-size:10px;color:#666;transform:scaleX(0.8912);transform-origin:0 0;">© kondado.com.br 2024 - v241121</div>
</body></html>
